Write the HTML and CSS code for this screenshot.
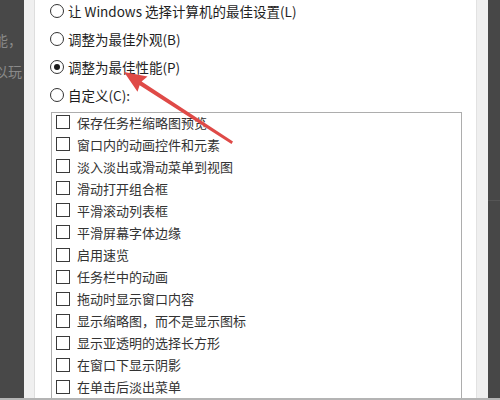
FILE: index.html
```html
<!DOCTYPE html>
<html lang="zh-CN">
<head>
<meta charset="utf-8">
<title>性能选项</title>
<link rel="stylesheet" href="styles.css">
</head>
<body>
<div class="screen">
  <div class="main">
    <div class="bg-left">
      <div class="bg-line bg-line-1">性能，</div>
      <div class="bg-line bg-line-2">可以玩</div>
    </div>
    <div class="frame-edge"></div>
    <div class="panel">
      <div class="radios">
        <div class="radio-row"><span class="radio"></span><span class="radio-label">让 Windows 选择计算机的最佳设置(L)</span></div>
        <div class="radio-row"><span class="radio"></span><span class="radio-label">调整为最佳外观(B)</span></div>
        <div class="radio-row"><span class="radio checked"></span><span class="radio-label">调整为最佳性能(P)</span></div>
        <div class="radio-row"><span class="radio"></span><span class="radio-label">自定义(C):</span></div>
      </div>
      <div class="list">
        <div class="items">
          <div class="item"><span class="box"></span><span class="item-label">保存任务栏缩略图预览</span></div>
          <div class="item"><span class="box"></span><span class="item-label">窗口内的动画控件和元素</span></div>
          <div class="item"><span class="box"></span><span class="item-label">淡入淡出或滑动菜单到视图</span></div>
          <div class="item"><span class="box"></span><span class="item-label">滑动打开组合框</span></div>
          <div class="item"><span class="box"></span><span class="item-label">平滑滚动列表框</span></div>
          <div class="item"><span class="box"></span><span class="item-label">平滑屏幕字体边缘</span></div>
          <div class="item"><span class="box"></span><span class="item-label">启用速览</span></div>
          <div class="item"><span class="box"></span><span class="item-label">任务栏中的动画</span></div>
          <div class="item"><span class="box"></span><span class="item-label">拖动时显示窗口内容</span></div>
          <div class="item"><span class="box"></span><span class="item-label">显示缩略图，而不是显示图标</span></div>
          <div class="item"><span class="box"></span><span class="item-label">显示亚透明的选择长方形</span></div>
          <div class="item"><span class="box"></span><span class="item-label">在窗口下显示阴影</span></div>
          <div class="item"><span class="box"></span><span class="item-label">在单击后淡出菜单</span></div>
        </div>
      </div>
    </div>
    <div class="frame-edge-right"></div>
    <div class="bg-right"><div class="bg-right-line"></div></div>
  </div>
  <div class="bottom-bar"></div>
  <svg class="arrow" width="500" height="400" viewBox="0 0 500 400" aria-hidden="true">
    <polygon class="arrow-shape" points="124,72 147.5,76.5 141.6,81.5 233,141.5 231.5,144 139.6,85.3 137.5,91.8"/>
  </svg>
</div>
</body>
</html>
```

FILE: styles.css
```css
html, body {
  margin: 0;
  padding: 0;
  background: #ffffff;
}

.screen {
  position: relative;
  width: 500px;
  height: 400px;
  overflow: hidden;
  display: flex;
  flex-direction: column;
  font-family: "Noto Sans CJK SC", "Noto Sans", sans-serif;
}

.main {
  flex: 1;
  display: flex;
  min-height: 0;
}

.bg-left {
  width: 24px;
  flex: none;
  background: #484848;
  overflow: hidden;
  display: flex;
  flex-direction: column;
  align-items: flex-end;
  padding-top: 30px;
  box-sizing: border-box;
}

.bg-line {
  color: #8a8a8a;
  font-size: 14px;
  line-height: 20px;
  white-space: nowrap;
  margin-right: 2px;
}

.bg-line-2 {
  margin-top: 11px;
}

.frame-edge {
  width: 10px;
  flex: none;
  background: #f0f0f0;
  border-right: 1px solid #dedede;
}

.panel {
  flex: 1;
  background: #ffffff;
  padding: 0 14px 0 15px;
  display: flex;
  flex-direction: column;
  min-width: 0;
}

.radios {
  margin-top: -3px;
  display: flex;
  flex-direction: column;
}

.radio-row {
  height: 28px;
  display: flex;
  align-items: center;
  gap: 4px;
}

.radio {
  width: 14px;
  height: 14px;
  box-sizing: border-box;
  border: 1px solid #333333;
  border-radius: 50%;
  display: flex;
  align-items: center;
  justify-content: center;
  flex: none;
}

.radio.checked::after {
  content: "";
  width: 6px;
  height: 6px;
  border-radius: 50%;
  background: #1a1a1a;
}

.radio-label {
  font-size: 13.5px;
  color: #1e1e1e;
  white-space: nowrap;
}

.list {
  margin: 3px 0 0 1px;
  flex: 1;
  border: 1px solid #adadad;
  border-bottom: none;
  padding-left: 4px;
  overflow: hidden;
}

.items {
  margin-top: -2px;
  display: flex;
  flex-direction: column;
}

.item {
  height: 22.08px;
  display: flex;
  align-items: center;
  gap: 7px;
}

.box {
  width: 14px;
  height: 14px;
  box-sizing: border-box;
  border: 1px solid #3a3a3a;
  flex: none;
}

.item-label {
  font-size: 13px;
  color: #333333;
  white-space: nowrap;
}

.frame-edge-right {
  width: 12px;
  flex: none;
  background: #efefef;
  border-left: 1px solid #e2e2e2;
  box-sizing: border-box;
}

.bg-right {
  width: 12px;
  flex: none;
  background: #474747;
  display: flex;
  flex-direction: column;
}

.bg-right-line {
  margin-top: 200px;
  height: 1px;
  background: #555555;
}

.bottom-bar {
  height: 2px;
  flex: none;
  background: #b4b4b4;
}

.arrow {
  position: absolute;
  left: 0;
  top: 0;
  pointer-events: none;
}

.arrow-shape {
  fill: #df4a47;
}
```
